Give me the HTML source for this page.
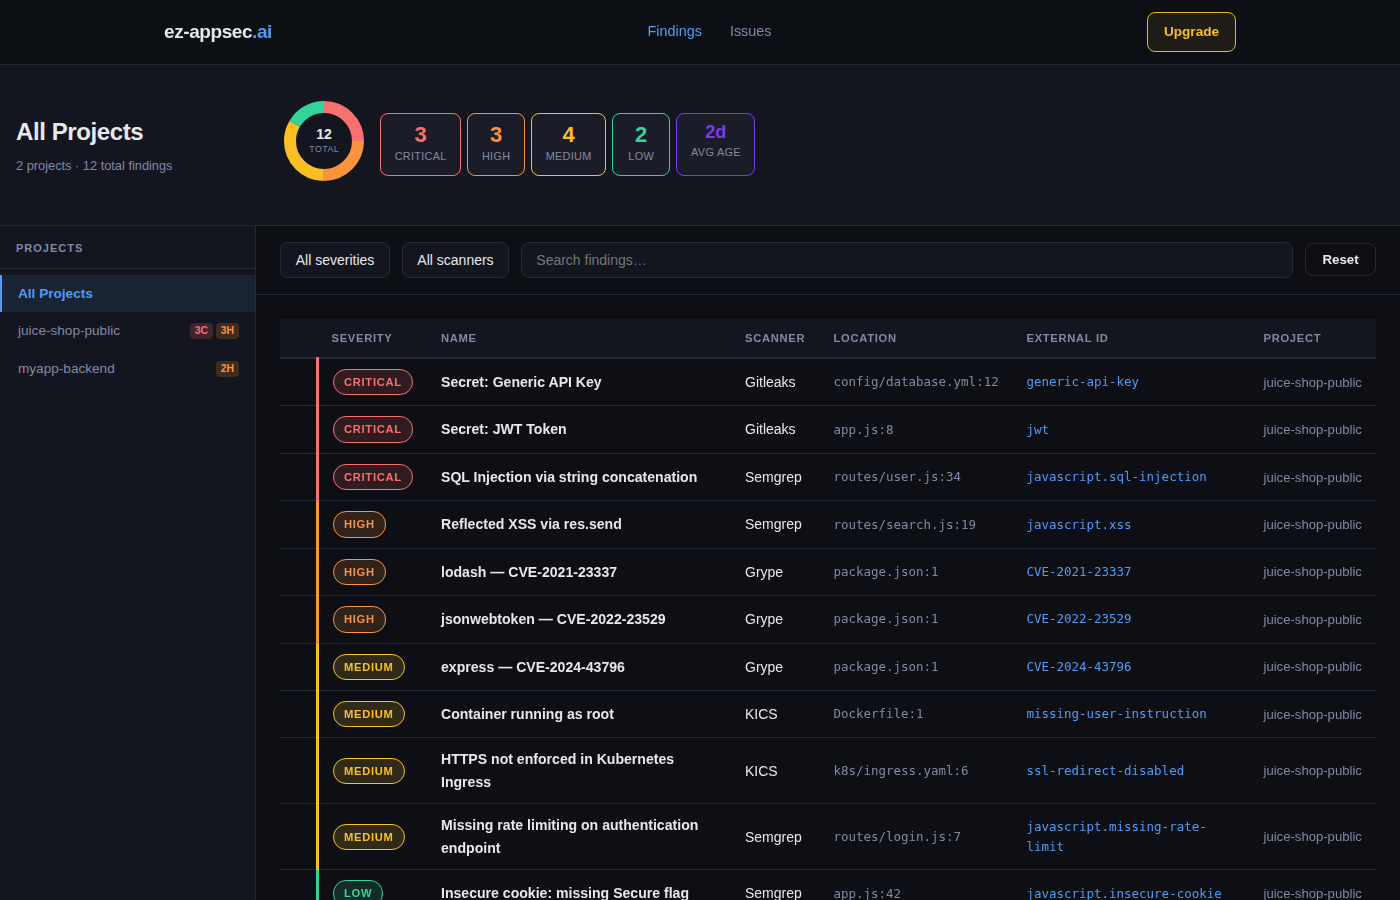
<!DOCTYPE html>
<html lang="en">
<head>
<meta charset="utf-8">
<title>ez-appsec.ai</title>
<style>
*{box-sizing:border-box;margin:0;padding:0}
html,body{width:1400px;height:900px;overflow:hidden}
body{background:#0e0f14;color:#e6e8ee;font-family:"Liberation Sans",Arial,sans-serif;font-size:14px;line-height:1.5}
.hdr{height:65px;border-bottom:1px solid #242737;background:#0c0f14}
.hdr-in{will-change:transform;max-width:1120px;margin:0 auto;padding:0 24px;height:64px;display:flex;align-items:center;justify-content:space-between}
.logo{font-size:19px;font-weight:700;letter-spacing:-0.42px;color:#e6e8ee}
.logo span{color:#4f9cf9}
.nav{display:flex;gap:28px;font-size:14.4px;position:relative;top:0;left:0}
.nav a{color:#8289a3;text-decoration:none}
.nav a.on{color:#4f9cf9}
.upg{border:1px solid #efb423;background:rgba(251,191,36,.08);color:#fbbf24;font-weight:700;font-size:13.6px;border-radius:8px;height:40px;width:89px;display:flex;align-items:center;justify-content:center}
.sum{height:161px;background:#14161f;border-bottom:1px solid #252a39;position:relative}
.sum h1{position:absolute;left:16px;top:49px;font-size:24px;line-height:36px;font-weight:700;letter-spacing:-0.4px}
.sum .sub{position:absolute;left:16px;top:91px;font-size:12.8px;color:#8289a3}
.donut{position:absolute;left:284px;top:36px;width:80px;height:80px}
.dn{position:absolute;left:284px;width:80px;text-align:center}
.dn.a{top:61px;font-size:14px;line-height:16px;font-weight:700}
.dn.b{top:78px;font-size:8.8px;line-height:12px;letter-spacing:.5px;color:#8289a3;padding-left:.5px}
.stats{position:absolute;left:380px;top:48px;display:flex;gap:6px}
.st{height:63px;border:1px solid;border-radius:8px;background:#1a1d28;text-align:center;padding-top:7px}
.st b{display:block;font-size:22px;line-height:26px;padding-top:1px;font-weight:700}
.st i{display:block;font-style:normal;font-size:10.88px;line-height:16px;color:#8289a3;letter-spacing:.3px;padding-left:.3px}
.side{position:absolute;left:0;top:226px;width:256px;height:674px;background:#14161f;border-right:1px solid #252a39}
.side .lab{font-size:11px;font-weight:700;letter-spacing:1px;color:#8289a3;padding:14px 16px 0;height:43px;border-bottom:1px solid #252a39}
.side .it{height:37px;margin-bottom:1px;display:flex;align-items:center;padding:0 16px 0 18px;font-size:13.6px;color:#8289a3;position:relative}
.side .it.on{margin-top:6px;background:#1a2334;color:#4f9cf9;font-weight:700;border-left:2px solid #4f9cf9;padding-left:16px;padding-top:1px}
.side .it .bd{margin-left:auto;display:flex;gap:3px}
.bd span{font-size:10.4px;font-weight:700;border-radius:4px;width:23px;text-align:center;height:16px;line-height:15px;position:relative;top:-1px}
.bc{background:#3e252e;color:#f87171}.bh{background:#3e2c21;color:#fb923c}
.main{position:absolute;left:256px;top:226px;width:1144px;height:674px}
.fb{height:69px;border-bottom:1px solid #252a39;position:relative}
.btn{position:absolute;top:16px;height:36px;border:1px solid #252a39;background:#14161f;border-radius:8px;font-size:14px;display:flex;align-items:center;justify-content:center;color:#e6e8ee;padding-top:1px}
.tw{position:absolute;left:24px;top:92px;width:1096px;height:582px;will-change:transform}
table{position:absolute;left:0;top:.8px;width:1096px;border-collapse:separate;border-spacing:0;table-layout:fixed}
th{height:40px;background:#14161f;text-align:left;font-size:11.2px;font-weight:700;letter-spacing:.7px;color:#8289a3;padding:1.2px 14px 0;border-bottom:2px solid #252a39}
td{padding:0 14px 1px;box-shadow:inset 0 -1px 0 #252a39;vertical-align:middle;font-size:14px}
td.nm{font-weight:700;line-height:22.4px;font-size:14.08px}
td.loc{font-family:"DejaVu Sans Mono",monospace;font-size:12.48px;color:#8289a3;padding-top:1.1px}
td.sc{padding-top:.6px}
td.ext{font-family:"DejaVu Sans Mono",monospace;font-size:12.48px;color:#4f9cf9;padding-top:1.1px}
td.pr{font-size:13.12px;line-height:19.5px;color:#8289a3;padding-top:.7px;padding-right:0;white-space:nowrap}
td.sv{border-left:3px solid;padding:0 0 1px 14px}
tbody tr{height:47.46px}tbody tr.y{height:65.95px}
tr.y td.sv{padding-top:.5px}tr.y td.sc{padding-top:1.2px}
.pill{display:block;width:fit-content;height:26.45px;line-height:24px;border:1px solid;border-radius:13px;padding:0 10px;font-size:11.2px;font-weight:700;letter-spacing:.7px;vertical-align:middle}
.c{color:#f87171;border-color:#f87171}.h{color:#fb923c;border-color:#fb923c}.m{color:#fbbf24;border-color:#fbbf24}.l{color:#34d399;border-color:#34d399}.p{color:#7c3aed;border-color:#7c3aed}
.pill.c{background:#2f1c21}.pill.h{background:#30231c}.pill.m{background:#302a19}.pill.l{background:#142b27}
.cap{position:absolute;left:60px;top:131px;width:3px;height:2px;background:#f87171}
</style>
</head>
<body>
<div class="hdr"><div class="hdr-in">
<div class="logo">ez-appsec<span>.ai</span></div>
<div class="nav"><a class="on">Findings</a><a>Issues</a></div>
<div class="upg">Upgrade</div>
</div></div>
<div class="sum">
<h1>All Projects</h1>
<div class="sub">2 projects · 12 total findings</div>
<svg class="donut" viewBox="0 0 80 80">
<g fill="none" stroke-width="12" transform="rotate(-90 40 40)">
<circle cx="40" cy="40" r="34" stroke="#f87171" stroke-dasharray="53.41 213.63" stroke-dashoffset="0"/>
<circle cx="40" cy="40" r="34" stroke="#fb923c" stroke-dasharray="53.41 213.63" stroke-dashoffset="-53.41"/>
<circle cx="40" cy="40" r="34" stroke="#fbbf24" stroke-dasharray="71.21 213.63" stroke-dashoffset="-106.81"/>
<circle cx="40" cy="40" r="34" stroke="#34d399" stroke-dasharray="35.6 213.63" stroke-dashoffset="-178.02"/>
</g>
</svg>
<div class="dn a">12</div><div class="dn b">TOTAL</div>
<div class="stats">
<div class="st c" style="width:81px"><b>3</b><i>CRITICAL</i></div>
<div class="st h" style="width:58px"><b>3</b><i>HIGH</i></div>
<div class="st m" style="width:75px"><b>4</b><i>MEDIUM</i></div>
<div class="st l" style="width:58px"><b>2</b><i>LOW</i></div>
<div class="st p" style="width:79px;padding-top:5px;padding-left:.6px"><b style="font-size:18px;line-height:24px">2d</b><i>AVG AGE</i></div>
</div>
</div>
<div class="side">
<div class="lab">PROJECTS</div>
<div class="it on">All Projects</div>
<div class="it">juice-shop-public<div class="bd"><span class="bc">3C</span><span class="bh">3H</span></div></div>
<div class="it">myapp-backend<div class="bd"><span class="bh">2H</span></div></div>
</div>
<div class="main">
<div class="fb">
<div class="btn" style="left:24px;width:110px">All severities</div>
<div class="btn" style="left:146px;width:107px">All scanners</div>
<div class="btn" style="left:265px;width:772px;justify-content:flex-start;padding-left:14.3px;color:#757575">Search findings…</div>
<div class="btn" style="left:1049px;width:71px;top:17px;height:33px;padding-top:0;font-size:13.3px;font-weight:700;background:transparent;will-change:transform">Reset</div>
</div>
<div class="tw"><table>
<colgroup><col style="width:36px"><col style="width:111px"><col style="width:304px"><col style="width:88.5px"><col style="width:193px"><col style="width:237px"><col style="width:126.5px"></colgroup>
<thead><tr><th></th><th style="padding-left:15.5px">SEVERITY</th><th>NAME</th><th>SCANNER</th><th>LOCATION</th><th>EXTERNAL ID</th><th>PROJECT</th></tr></thead>
<tbody>
<tr><td></td><td class="sv c"><span class="pill c">CRITICAL</span></td><td class="nm">Secret: Generic API Key</td><td class="sc">Gitleaks</td><td class="loc">config/database.yml:12</td><td class="ext">generic-api-key</td><td class="pr">juice-shop-public</td></tr>
<tr class="x"><td></td><td class="sv c"><span class="pill c">CRITICAL</span></td><td class="nm">Secret: JWT Token</td><td class="sc">Gitleaks</td><td class="loc">app.js:8</td><td class="ext">jwt</td><td class="pr">juice-shop-public</td></tr>
<tr><td></td><td class="sv c"><span class="pill c">CRITICAL</span></td><td class="nm">SQL Injection via string concatenation</td><td class="sc">Semgrep</td><td class="loc">routes/user.js:34</td><td class="ext">javascript.sql-injection</td><td class="pr">juice-shop-public</td></tr>
<tr class="x"><td></td><td class="sv h"><span class="pill h">HIGH</span></td><td class="nm">Reflected XSS via res.send</td><td class="sc">Semgrep</td><td class="loc">routes/search.js:19</td><td class="ext">javascript.xss</td><td class="pr">juice-shop-public</td></tr>
<tr><td></td><td class="sv h"><span class="pill h">HIGH</span></td><td class="nm">lodash — CVE-2021-23337</td><td class="sc">Grype</td><td class="loc">package.json:1</td><td class="ext">CVE-2021-23337</td><td class="pr">juice-shop-public</td></tr>
<tr class="x"><td></td><td class="sv h"><span class="pill h">HIGH</span></td><td class="nm">jsonwebtoken — CVE-2022-23529</td><td class="sc">Grype</td><td class="loc">package.json:1</td><td class="ext">CVE-2022-23529</td><td class="pr">juice-shop-public</td></tr>
<tr><td></td><td class="sv m"><span class="pill m">MEDIUM</span></td><td class="nm">express — CVE-2024-43796</td><td class="sc">Grype</td><td class="loc">package.json:1</td><td class="ext">CVE-2024-43796</td><td class="pr">juice-shop-public</td></tr>
<tr><td></td><td class="sv m"><span class="pill m">MEDIUM</span></td><td class="nm">Container running as root</td><td class="sc">KICS</td><td class="loc">Dockerfile:1</td><td class="ext">missing-user-instruction</td><td class="pr">juice-shop-public</td></tr>
<tr class="y"><td></td><td class="sv m"><span class="pill m">MEDIUM</span></td><td class="nm">HTTPS not enforced in Kubernetes Ingress</td><td class="sc">KICS</td><td class="loc">k8s/ingress.yaml:6</td><td class="ext">ssl-redirect-disabled</td><td class="pr">juice-shop-public</td></tr>
<tr class="y"><td></td><td class="sv m"><span class="pill m">MEDIUM</span></td><td class="nm">Missing rate limiting on authentication endpoint</td><td class="sc">Semgrep</td><td class="loc">routes/login.js:7</td><td class="ext" style="line-height:19.97px;padding-top:.6px">javascript.missing-rate-limit</td><td class="pr">juice-shop-public</td></tr>
<tr><td></td><td class="sv l"><span class="pill l">LOW</span></td><td class="nm">Insecure cookie: missing Secure flag</td><td class="sc">Semgrep</td><td class="loc">app.js:42</td><td class="ext">javascript.insecure-cookie</td><td class="pr">juice-shop-public</td></tr>
<tr><td></td><td class="sv l"><span class="pill l">LOW</span></td><td class="nm">Debug mode enabled</td><td class="sc">Semgrep</td><td class="loc">config/app.js:3</td><td class="ext">javascript.debug-enabled</td><td class="pr">myapp-backend</td></tr>
</tbody>
</table></div>
<div class="cap"></div>
</div>
</body>
</html>
